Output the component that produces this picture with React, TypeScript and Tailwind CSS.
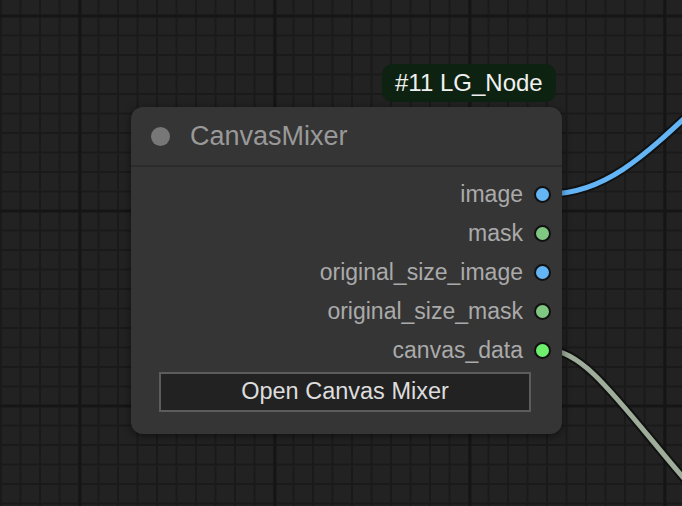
import React from "react";

const outputs = [
  { name: "image", color: "bg-[#64b5f6]" },
  { name: "mask", color: "bg-[#81c784]" },
  { name: "original_size_image", color: "bg-[#64b5f6]" },
  { name: "original_size_mask", color: "bg-[#81c784]" },
  { name: "canvas_data", color: "bg-[#6ef06e]" },
];

function CanvasGrid() {
  return (
    <svg className="absolute inset-0 w-full h-full" xmlns="http://www.w3.org/2000/svg">
      <defs>
        <pattern id="minor" x="1" y="16" width="19.5" height="19.5" patternUnits="userSpaceOnUse">
          <rect width="19.5" height="19.5" fill="#222222" />
          <rect x="-1" y="0" width="2" height="19.5" fill="#1a1a1a" />
          <rect x="18.5" y="0" width="2" height="19.5" fill="#1a1a1a" />
          <rect x="0" y="-1" width="19.5" height="2" fill="#1a1a1a" />
          <rect x="0" y="18.5" width="19.5" height="2" fill="#1a1a1a" />
        </pattern>
        <pattern id="major" x="80" y="16" width="195" height="195" patternUnits="userSpaceOnUse">
          <rect x="-1.5" y="0" width="3" height="195" fill="#151515" />
          <rect x="193.5" y="0" width="3" height="195" fill="#151515" />
          <rect x="0" y="-1.5" width="195" height="3" fill="#151515" />
          <rect x="0" y="193.5" width="195" height="3" fill="#151515" />
        </pattern>
      </defs>
      <rect width="100%" height="100%" fill="url(#minor)" />
      <rect width="100%" height="100%" fill="url(#major)" />
      {/* links */}
      <path d="M548 194 C610 194 650 150 720 85" fill="none" stroke="#111" strokeWidth="9" />
      <path d="M548 194 C610 194 650 150 720 85" fill="none" stroke="#64b5f6" strokeWidth="5" />
      <path d="M548 350 C590 350 630 420 720 520" fill="none" stroke="#111" strokeWidth="9" />
      <path d="M548 350 C590 350 630 420 720 520" fill="none" stroke="#9fae9a" strokeWidth="5" />
    </svg>
  );
}

export default function App() {
  return (
    <main
      className="relative w-[682px] h-[506px] overflow-hidden bg-[#222222]"
      style={{ fontFamily: '"Liberation Sans", Arial, sans-serif' }}
    >
      <CanvasGrid />

      {/* node badge */}
      <div className="absolute left-[382px] top-[64px] h-[38px] px-[13px] flex items-center rounded-[10px] bg-[#0e2211] text-[#f0f0f0] text-[24px] leading-none">
        #11 LG_Node
      </div>

      {/* node */}
      <div className="absolute left-[131px] top-[107px] w-[431px] h-[327px] rounded-[12px] bg-[#353535] shadow-[0_2px_8px_rgba(0,0,0,0.5)] flex flex-col">
        <div className="h-[60px] flex items-center pl-[20px] gap-[20px] border-b-2 border-[#2b2b2b]">
          <span className="w-[19px] h-[19px] rounded-full bg-[#777777]" />
          <span className="text-[27px] text-[#999999] leading-none">CanvasMixer</span>
        </div>
        <div className="pt-[8px] flex flex-col">
          {outputs.map((o) => (
            <div key={o.name} className="h-[39px] flex items-center justify-end pr-[11px] gap-[11px]">
              <span className="text-[23px] text-[#aaaaaa] leading-none">{o.name}</span>
              <span className={`w-[17px] h-[17px] rounded-full border-2 border-[#111111] ${o.color}`} />
            </div>
          ))}
        </div>
        <div className="pl-[28px] pr-[31px] mt-[2px]">
          <button className="w-full h-[40px] bg-[#222222] border-2 border-[#5c5c5c] text-[23.5px] text-[#dddddd] leading-none">
            Open Canvas Mixer
          </button>
        </div>
      </div>
    </main>
  );
}
